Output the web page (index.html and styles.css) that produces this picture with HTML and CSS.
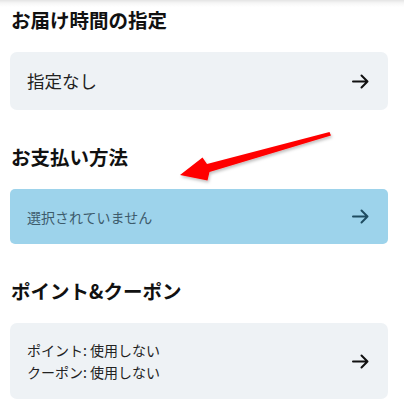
FILE: index.html
```html
<!DOCTYPE html>
<html lang="ja">
<head>
<meta charset="utf-8">
<link rel="stylesheet" href="styles.css">
</head>
<body>
<div class="page">
  <section class="section">
    <h2 class="title">お届け時間の指定</h2>
    <div class="card card-tall">
      <div class="card-text large">指定なし</div>
      <svg class="arrow" viewBox="0 0 17 15" width="17" height="15"><path d="M1 7.5H15.5M9.5 1.5L15.5 7.5L9.5 13.5" fill="none" stroke="currentColor" stroke-width="2" stroke-linecap="round" stroke-linejoin="round"/></svg>
    </div>
  </section>
  <section class="section">
    <h2 class="title">お支払い方法</h2>
    <div class="card card-blue">
      <div class="card-text">選択されていません</div>
      <svg class="arrow" viewBox="0 0 17 15" width="17" height="15"><path d="M1 7.5H15.5M9.5 1.5L15.5 7.5L9.5 13.5" fill="none" stroke="currentColor" stroke-width="2" stroke-linecap="round" stroke-linejoin="round"/></svg>
    </div>
  </section>
  <section class="section">
    <h2 class="title">ポイント&amp;クーポン</h2>
    <div class="card card-double">
      <div class="card-text lines">
        <div>ポイント: 使用しない</div>
        <div>クーポン: 使用しない</div>
      </div>
      <svg class="arrow" viewBox="0 0 17 15" width="17" height="15"><path d="M1 7.5H15.5M9.5 1.5L15.5 7.5L9.5 13.5" fill="none" stroke="currentColor" stroke-width="2" stroke-linecap="round" stroke-linejoin="round"/></svg>
    </div>
  </section>
</div>
<svg class="pointer" viewBox="0 0 404 404" width="404" height="404">
  <defs>
    <filter id="sh" x="-20%" y="-50%" width="140%" height="200%">
      <feDropShadow dx="1" dy="2" stdDeviation="1.5" flood-color="#000" flood-opacity="0.25"/>
    </filter>
  </defs>
  <polygon points="180,175 202.5,157.5 207,164 329.5,132 331,135.5 209.5,172 207.5,180.5" fill="#ff0000" filter="url(#sh)"/>
</svg>
</body>
</html>
```
FILE: styles.css
```css
html, body {
  margin: 0;
  padding: 0;
}
body {
  width: 404px;
  height: 404px;
  overflow: hidden;
  position: relative;
  background: linear-gradient(to bottom, #e4e4e4 0px, #f6f6f6 3px, #ffffff 7px) no-repeat;
  font-family: "Noto Sans CJK JP", "Noto Sans", sans-serif;
  color: #1a1a1a;
}
.page {
  display: flex;
  flex-direction: column;
  gap: 33px;
  padding: 6px 16px 0 10px;
}
.section {
  display: flex;
  flex-direction: column;
  gap: 18px;
}
.title {
  margin: 0;
  padding-left: 1px;
  font-size: 19.5px;
  line-height: 28px;
  font-weight: 700;
  color: #111;
}
.card {
  display: flex;
  align-items: center;
  justify-content: space-between;
  background: #eef2f5;
  border-radius: 7px;
  padding: 0 19px 0 17px;
  color: #222;
}
.card-tall {
  height: 58px;
}
.card-blue {
  height: 55px;
  background: #9dd3eb;
  border-radius: 5px;
  color: #3d5b6b;
}
.card-blue .arrow {
  color: #1f4c61;
}
.card-double {
  height: 76px;
}
.card-text {
  font-size: 14px;
  line-height: 22px;
}
.card-text.large {
  font-size: 17.5px;
}
.arrow {
  display: block;
  color: #111;
}
.pointer {
  position: absolute;
  left: 0;
  top: 0;
  pointer-events: none;
}
```
